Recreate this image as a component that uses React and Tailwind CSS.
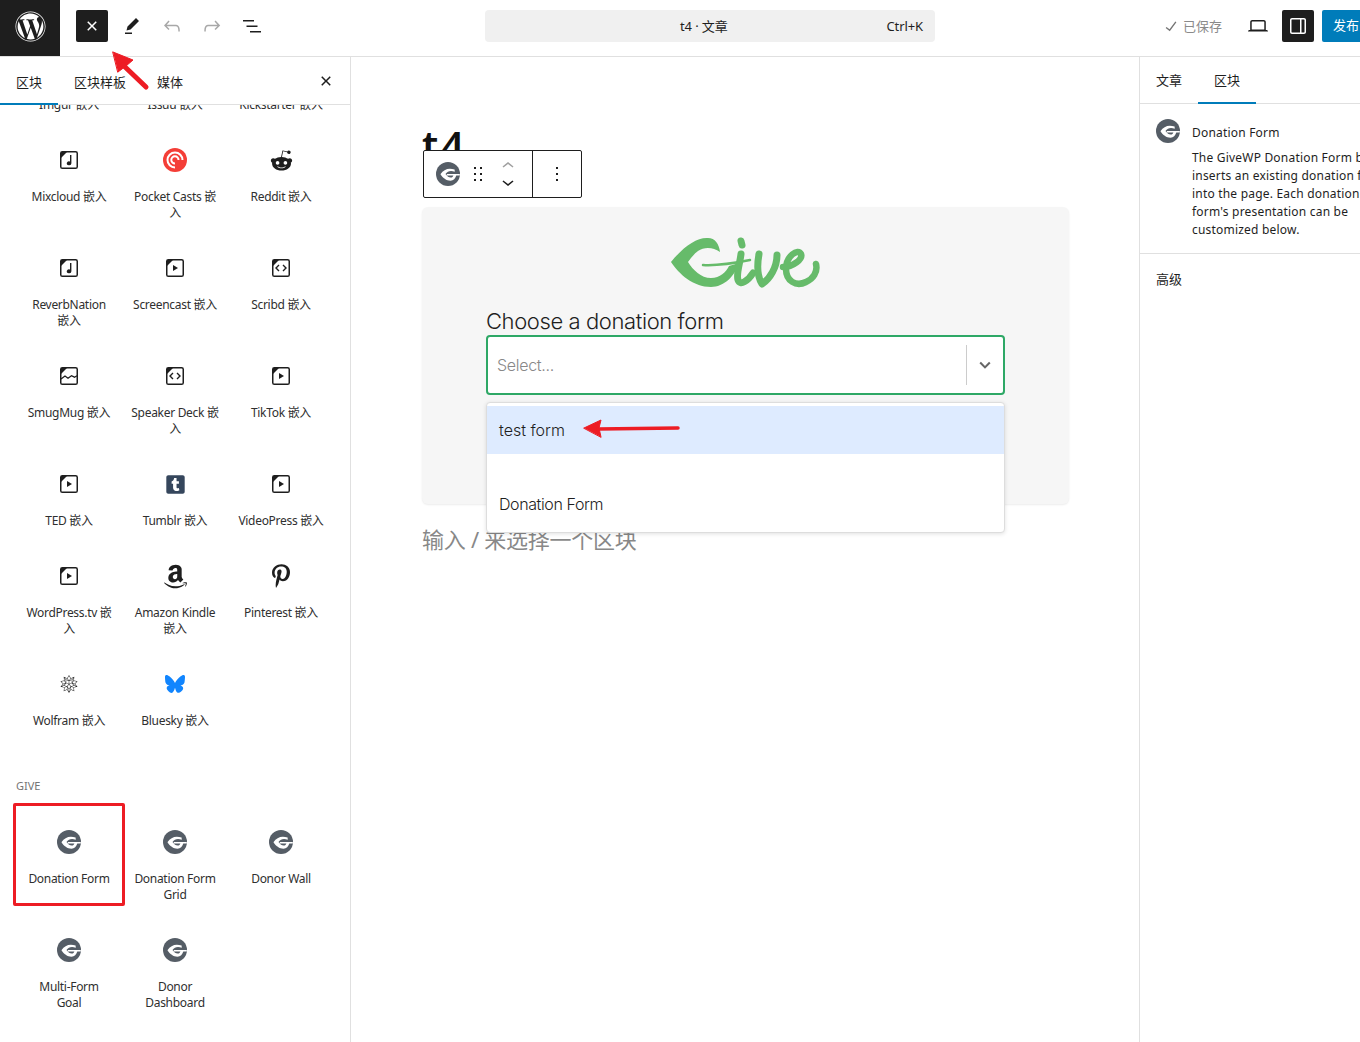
import React from 'react';
import { FaWordpress, FaRedditAlien, FaAmazon, FaPinterestP, FaTumblrSquare } from 'react-icons/fa';
import { FaBluesky } from 'react-icons/fa6';
import { SiWolfram } from 'react-icons/si';

const WpIcon = ({ d, className = '', size = 24 }) => (
  <svg viewBox="0 0 24 24" width={size} height={size} className={className} fill="currentColor">
    <path d={d} />
  </svg>
);

const ICONS = {
  close: 'M12 13.06l3.712 3.713 1.061-1.06L13.061 12l3.712-3.712-1.06-1.06L12 10.938 8.288 7.227l-1.061 1.06L10.939 12l-3.712 3.712 1.06 1.061L12 13.061z',
  pencil: 'm19 7-3-3-8.5 8.5-1 4 4-1L19 7Zm-7 11.5H5V20h7v-1.5Z',
  undo: 'M18.3 11.7c-.6-.6-1.4-.9-2.3-.9H6.7l2.9-3.3-1.1-1-4.5 5L8.5 16l1-1-2.7-2.7H16c.5 0 .9.2 1.3.5 1 1 1 3.4 1 4.5v.3h1.5v-.2c0-1.5 0-4.3-1.5-5.7z',
  redo: 'M15.6 6.5l-1.1 1 2.9 3.3H8c-.9 0-1.7.3-2.3.9-1.4 1.5-1.4 4.2-1.4 5.6v.2h1.5v-.3c0-1.1 0-3.5 1-4.5.3-.3.7-.5 1.3-.5h9.2L14.5 15l1.1 1.1 4.6-4.6-4.6-5z',
  list: 'M3 6h11v1.5H3V6Zm3.5 5.5h11V13h-11v-1.5ZM21 17H10v1.5h11V17Z',
  laptop: 'M20.5 16h-.7V8c0-1.1-.9-2-2-2H6.2c-1.1 0-2 .9-2 2v8h-.7c-.8 0-1.5.7-1.5 1.5h20c0-.8-.7-1.5-1.5-1.5zM5.7 8c0-.3.2-.5.5-.5h11.6c.3 0 .5.2.5.5v7.6H5.7V8z',
  drawer: 'M18 4H6c-1.1 0-2 .9-2 2v12c0 1.1.9 2 2 2h12c1.1 0 2-.9 2-2V6c0-1.1-.9-2-2-2zm-4 14.5H6c-.3 0-.5-.2-.5-.5V6c0-.3.2-.5.5-.5h8v13zm4.5-.5c0 .3-.2.5-.5.5h-2.5v-13H18c.3 0 .5.2.5.5v12z',
  check: 'M16.7 7.1l-6.3 8.5-3.3-2.5-.9 1.2 4.5 3.4L17.9 8z',
  more: 'M13 19h-2v-2h2v2zm0-6h-2v-2h2v2zm0-6h-2V5h2v2z',
  drag: 'M8 7h2V5H8v2zm0 6h2v-2H8v2zm0 6h2v-2H8v2zm6-14v2h2V5h-2zm0 8h2v-2h-2v2zm0 6h2v-2h-2v2z',
  up: 'M6.5 12.4L12 8l5.5 4.4-.9 1.2L12 10l-4.5 3.6-1-1.2z',
  down: 'M17.5 11.6L12 16l-5.5-4.4.9-1.2L12 14l4.5-3.6 1 1.2z',
};

const EmbedIcon = ({ kind }) => (
  <svg viewBox="0 0 24 24" width="24" height="24" className="text-[#1e1e1e]" fill="currentColor">
    <rect x="3.75" y="3.75" width="16.5" height="16.5" rx="1.6" fill="none" stroke="currentColor" strokeWidth="1.5" />
    <path d="M4 4h6L4 10z" />
    {kind === 'video' && <path d="M10 9v6l5-3z" />}
    {kind === 'audio' && <path d="M13 7h1.4v8.2a2.3 2 0 1 1-1.4-1.8z" />}
    {kind === 'code' && (
      <path d="M10 9l-3 3 3 3M14 9l3 3-3 3" fill="none" stroke="currentColor" strokeWidth="1.4" />
    )}
    {kind === 'photo' && (
      <path d="M4 15l4-3 3 2.2 3.5-2.5 3 1.5 2.5-1.5" fill="none" stroke="currentColor" strokeWidth="1.3" />
    )}
  </svg>
);

const GiveIcon = ({ size = 24 }) => (
  <svg viewBox="0 0 24 24" width={size} height={size}>
    <circle cx="12" cy="12" r="12" fill="#555d66" />
    <path
      d="M4.6 12C7.800 7.400 12.500 5.400 18.600 7.600l.2 2.200c-4-1.600-7.200-.8-9.300 2.200 2 2.800 4.300 4.200 6.200 3.400 .8-.4 1.300-1 1.700-1.900H10.800v-1.500H23.800v1.500h-3.500c-.9 3-2.800 5.200-5.800 5.200-4.200 0-7.600-2.800-9.900-6.200z"
      fill="#fff"
    />
  </svg>
);

const PocketCasts = () => (
  <svg viewBox="0 0 24 24" width="24" height="24">
    <circle cx="12" cy="12" r="12" fill="#f43e37" />
    <path d="M12 19.500A7.500 7.500 0 1 1 19.500 12" fill="none" stroke="#fff" strokeWidth="2" />
    <path d="M12 15.500A3.600 3.600 0 1 1 15.500 12" fill="none" stroke="#fff" strokeWidth="2" />
  </svg>
);

const GiveLogo = () => (
  <svg viewBox="0 0 160 62" width="160" height="62" fill="none" stroke="#66bb6a" strokeLinecap="round" strokeLinejoin="round">
    <path
      d="M6 30C18 15 32 5 43 6c7 0 11 6 12 14-7-5-16-5-22-1-4 3-7 7-10 11 5 8 13 16 23 16 9 0 15-6 18-12l10-3c-4 13-15 24-28 24C28 55 14 42 6 30z"
      fill="#66bb6a"
      stroke="none"
    />
    <path d="M38 33c15 1 32-2 47-5" strokeWidth="2.5" />
    <path d="M76 9l1 4" strokeWidth="7" />
    <path d="M76 22c-1 9-5 20-3 26 2 6 10 1 15-7" strokeWidth="7" />
    <path d="M94 22c-2 11-2 22 3 30 8-5 15-17 15-29" strokeWidth="7" />
    <path d="M118 35c10 0 20-8 18-13-3-6-15 2-15 15 0 12 10 18 20 13 7-3 12-10 10-18" strokeWidth="6.500" />
  </svg>
);

const rows = [
  [
    { label: 'Mixcloud 嵌入', icon: <EmbedIcon kind="audio" /> },
    { label: 'Pocket Casts 嵌\n入', icon: <PocketCasts /> },
    { label: 'Reddit 嵌入', icon: <FaRedditAlien size={23} className="text-[#1e1e1e]" /> },
  ],
  [
    { label: 'ReverbNation\n嵌入', icon: <EmbedIcon kind="audio" /> },
    { label: 'Screencast 嵌入', icon: <EmbedIcon kind="video" /> },
    { label: 'Scribd 嵌入', icon: <EmbedIcon kind="code" /> },
  ],
  [
    { label: 'SmugMug 嵌入', icon: <EmbedIcon kind="photo" /> },
    { label: 'Speaker Deck 嵌\n入', icon: <EmbedIcon kind="code" /> },
    { label: 'TikTok 嵌入', icon: <EmbedIcon kind="video" /> },
  ],
  [
    { label: 'TED 嵌入', icon: <EmbedIcon kind="video" /> },
    { label: 'Tumblr 嵌入', icon: <FaTumblrSquare size={21} className="text-[#35465c]" /> },
    { label: 'VideoPress 嵌入', icon: <EmbedIcon kind="video" /> },
  ],
  [
    { label: 'WordPress.tv 嵌\n入', icon: <EmbedIcon kind="video" /> },
    { label: 'Amazon Kindle\n嵌入', icon: <FaAmazon size={27} className="shrink-0 text-[#1e1e1e]" /> },
    { label: 'Pinterest 嵌入', icon: <FaPinterestP size={24} className="shrink-0 text-[#1e1e1e]" /> },
  ],
  [
    { label: 'Wolfram 嵌入', icon: <SiWolfram size={18} className="text-[#1e1e1e]" /> },
    { label: 'Bluesky 嵌入', icon: <FaBluesky size={20} className="text-[#1185fe]" /> },
  ],
];

const giveRows = [
  ['Donation Form', 'Donation Form\nGrid', 'Donor Wall'],
  ['Multi-Form\nGoal', 'Donor\nDashboard'],
];

function BlockCell({ icon, label }) {
  return (
    <div className="flex flex-col items-center pb-[35px]">
      <div className="flex h-6 w-6 items-center justify-center">{icon}</div>
      <div className="mt-[17px] whitespace-pre-line text-center text-[12px] leading-4 tracking-[-0.3px] text-[#2f2f2f]">{label}</div>
    </div>
  );
}

function Inserter() {
  return (
    <aside className="flex w-[351px] shrink-0 flex-col border-r border-[#e0e0e0]">
      <div className="flex h-[48px] shrink-0 items-center border-b border-[#e0e0e0] pt-[3px] text-[13px] text-[#1e1e1e]">
        <div className="relative flex h-full items-center px-4 pt-[1px]">
          区块
          <span className="absolute -bottom-px left-0 h-[2px] w-[58px] bg-[#007cba]" />
        </div>
        <div className="px-4 pt-[1px]">区块样板</div>
        <div className="pl-[15px] pt-[1px]">媒体</div>
        <WpIcon d={ICONS.close} size={24} className="ml-auto mr-[12px] -mt-[3px]" />
      </div>
      <div className="flex-1 overflow-hidden">
        <div className="grid h-2 grid-cols-3 overflow-hidden px-4">
          {['Imgur 嵌入', 'Issuu 嵌入', 'Kickstarter 嵌入'].map((t) => (
            <div key={t} className="-mt-2 text-center text-[12px] leading-4 tracking-[-0.3px] text-[#2f2f2f]">{t}</div>
          ))}
        </div>
        <div className="mt-[35px]">
          {rows.map((row, i) => (
            <div key={i} className="grid grid-cols-3 items-start px-4">
              {row.map((c) => (
                <BlockCell key={c.label} icon={c.icon} label={c.label} />
              ))}
            </div>
          ))}
        </div>
        <div className="mb-9 mt-[14px] px-4 text-[11px] leading-4 text-[#757575]">GIVE</div>
        {giveRows.map((row, i) => (
          <div key={i} className="grid grid-cols-3 items-start px-4">
            {row.map((label) => (
              <BlockCell key={label} icon={<GiveIcon />} label={label} />
            ))}
          </div>
        ))}
      </div>
    </aside>
  );
}

function BlockToolbar() {
  return (
    <div className="absolute left-[72px] top-[93px] flex h-12 w-[159px] rounded-[2px] border border-[#1e1e1e] bg-white">
      <div className="flex w-[109px] items-center border-r border-[#1e1e1e] pl-[12px]">
        <GiveIcon />
        <WpIcon d={ICONS.drag} className="ml-[6px] text-[#1e1e1e]" />
        <div className="ml-[6px] flex flex-col">
          <WpIcon d={ICONS.up} className="text-[#a0a0a0]" />
          <WpIcon d={ICONS.down} className="-mt-2 text-[#1e1e1e]" />
        </div>
      </div>
      <div className="flex flex-1 items-center justify-center">
        <WpIcon d={ICONS.more} className="text-[#1e1e1e]" />
      </div>
    </div>
  );
}

function DonationCard() {
  return (
    <div className="relative h-[297px] w-[647px] rounded-md bg-[#f6f6f6] pt-[25px] shadow-[0_1px_2px_rgba(0,0,0,0.08)]">
      <div className="flex justify-center pr-[2px]">
        <GiveLogo />
      </div>
      <div className="ml-[64px] w-[519px] [font-family:Inter,sans-serif]">
        <div className="mt-[13px] text-[22px] font-light leading-7 tracking-[-0.4px] text-[#1e1e1e]">Choose a donation form</div>
        <div className="flex h-[60px] items-center rounded-[4px] border-2 border-[#2ea866] bg-white">
          <div className="flex-1 pl-[9px] text-[16px] font-light tracking-[-0.3px] text-[#888]">Select...</div>
          <div className="h-10 w-px bg-[#ccc]" />
          <div className="flex w-9 justify-center">
            <svg viewBox="0 0 20 20" width="16" height="16" fill="none" stroke="#666" strokeWidth="2.6">
              <path d="M4 7l6 6 6-6" />
            </svg>
          </div>
        </div>
        <div className="absolute left-[64px] top-[195px] z-10 h-[131px] w-[519px] rounded-[4px] border border-[#ddd] bg-white pt-[3px] text-[16px] font-light text-[#1e1e1e] shadow-[0_1px_4px_rgba(0,0,0,0.12)]">
          <div className="flex h-12 items-center bg-[#deebff] pl-3">test form</div>
          <div className="h-[26px]" />
          <div className="flex h-12 items-center pl-3 tracking-[-0.4px]">Donation Form</div>
        </div>
      </div>
    </div>
  );
}

function Canvas() {
  return (
    <main className="relative min-w-0 flex-1 pl-[71px] pt-[68px]">
      <div className="h-[82px] text-[40px] font-semibold leading-[40px] tracking-[3px] text-[#111] [font-family:'Noto_Sans',sans-serif]">t4</div>
      <DonationCard />
      <div className="mt-[20px] text-[22px] leading-[30px] tracking-[-0.25px] text-[#888]">输入 / 来选择一个区块</div>
      <BlockToolbar />
    </main>
  );
}

function SettingsPanel() {
  return (
    <aside className="w-[221px] shrink-0 overflow-hidden border-l border-[#e0e0e0]">
      <div className="flex h-[47px] items-center border-b border-[#e0e0e0] text-[13px] text-[#1e1e1e]">
        <div className="flex h-full w-[58px] items-center justify-center pt-[1px]">文章</div>
        <div className="relative flex h-full w-[58px] items-center justify-center pt-[1px]">
          区块
          <span className="absolute -bottom-px left-0 h-[2px] w-full bg-[#007cba]" />
        </div>
      </div>
      <div className="flex h-[150px] gap-3 border-b border-[#e0e0e0] pl-4 pt-[15px]">
        <div className="shrink-0">
          <GiveIcon />
        </div>
        <div className="text-[12px] leading-[18px] tracking-[0.2px] text-[#1e1e1e]">
          <div className="mb-[7px] mt-[5px]">Donation Form</div>
          <div className="whitespace-pre">
            {'The GiveWP Donation Form block\ninserts an existing donation form\ninto the page. Each donation\nform\'s presentation can be\ncustomized below.'}
          </div>
        </div>
      </div>
      <div className="pl-4 pt-[16px] text-[13px] leading-[18px] text-[#1e1e1e]">高级</div>
    </aside>
  );
}

function TopBar() {
  return (
    <header className="flex h-[57px] shrink-0 items-start border-b border-[#e0e0e0]">
      <div className="flex h-14 w-[60px] shrink-0 justify-center bg-[#1e1e1e] pt-[11px] text-white">
        <FaWordpress size={31} />
      </div>
      <div className="flex h-[52px] flex-1 items-center">
        <div className="ml-4 flex h-8 w-8 items-center justify-center rounded-[2px] bg-[#1e1e1e] text-white">
          <WpIcon d={ICONS.close} size={24} />
        </div>
        <div className="ml-1 flex">
          <div className="flex w-10 justify-center text-[#1e1e1e]"><WpIcon d={ICONS.pencil} /></div>
          <div className="flex w-10 justify-center text-[#a8a8a8]"><WpIcon d={ICONS.undo} /></div>
          <div className="flex w-10 justify-center text-[#a8a8a8]"><WpIcon d={ICONS.redo} /></div>
          <div className="flex w-10 justify-center text-[#1e1e1e]"><WpIcon d={ICONS.list} /></div>
        </div>
        <div className="ml-[213px] flex h-8 w-[450px] items-center rounded-[4px] bg-[#f0f0f0] pl-[195px] pr-3 pt-[2px] text-[13px] tracking-[-0.1px] text-[#1e1e1e]">
          t4 · 文章
          <span className="ml-auto">Ctrl+K</span>
        </div>
        <div className="ml-auto flex items-center">
          <WpIcon d={ICONS.check} size={22} className="text-[#757575]" />
          <span className="ml-[1px] pt-[1px] text-[13px] text-[#8a8a8a]">已保存</span>
          <WpIcon d={ICONS.laptop} className="ml-6 text-[#1e1e1e]" />
          <div className="ml-[12px] flex h-8 w-8 items-center justify-center rounded-[2px] bg-[#1e1e1e] text-white">
            <WpIcon d={ICONS.drawer} />
          </div>
          <div className="ml-2 flex h-8 w-[38px] items-center overflow-hidden rounded-l-[2px] bg-[#007cba] pl-[11px] text-[13px] whitespace-nowrap text-white">
            发布
          </div>
        </div>
      </div>
    </header>
  );
}

function Annotations() {
  return (
    <>
      <div className="absolute left-[13px] top-[803px] z-20 h-[103px] w-[112px] rounded-[2px] border-[3px] border-[#ed1c24]" />
      <svg className="absolute left-[105px] top-[45px] z-20" width="50" height="50" fill="#ed1c24" stroke="#ed1c24" strokeLinecap="round">
        <path d="M8 7l20 8-7 6-8 6z" strokeWidth="1" />
        <path d="M18 20l23 22" strokeWidth="5" fill="none" />
      </svg>
      <svg className="absolute left-[580px] top-[415px] z-20" width="105" height="26" fill="#ed1c24" stroke="#ed1c24" strokeLinecap="round">
        <path d="M4 13l17-8-2 8 2 9z" strokeWidth="1" />
        <path d="M18 14l80-1" strokeWidth="3.500" fill="none" />
      </svg>
    </>
  );
}

export default function App() {
  return (
    <div className="relative flex h-[1042px] w-[1360px] flex-col overflow-hidden bg-white [font-family:'Noto_Sans','Noto_Sans_CJK_SC',sans-serif]">
      <TopBar />
      <div className="flex min-h-0 flex-1">
        <Inserter />
        <Canvas />
        <SettingsPanel />
      </div>
      <Annotations />
    </div>
  );
}
